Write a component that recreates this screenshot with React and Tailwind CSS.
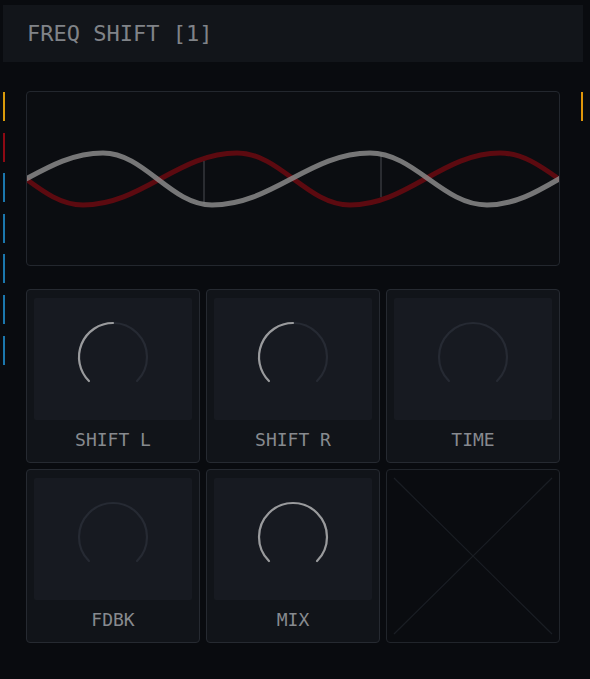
import React from "react";

const FONT = { fontFamily: '"DejaVu Sans Mono", "Liberation Mono", monospace' };

function wavePath(pts, k = 0.38) {
  let d = `M ${pts[0][0]} ${pts[0][1]}`;
  for (let i = 1; i < pts.length; i++) {
    const [ax, ay] = pts[i - 1];
    const [bx, by] = pts[i];
    const dx = bx - ax;
    d += ` C ${ax + k * dx} ${ay} ${bx - k * dx} ${by} ${bx} ${by}`;
  }
  return d;
}

const grayPts = [[-51, 205], [103, 153], [212, 205], [370, 153], [487, 205], [631, 153]];
const redPts = [[-31, 153], [83, 205], [237, 153], [350, 205], [500, 153], [618, 205]];

function arcPoint(cx, cy, r, deg) {
  const a = (deg * Math.PI) / 180;
  return [cx + r * Math.sin(a), cy - r * Math.cos(a)];
}

function arc(cx, cy, r, a0, a1) {
  const [x0, y0] = arcPoint(cx, cy, r, a0);
  const [x1, y1] = arcPoint(cx, cy, r, a1);
  const large = a1 - a0 > 180 ? 1 : 0;
  return `M ${x0} ${y0} A ${r} ${r} 0 ${large} 1 ${x1} ${y1}`;
}

function Knob({ value }) {
  const cx = 40, cy = 40, r = 34;
  const end = -135 + 270 * value;
  return (
    <svg width="80" height="80" viewBox="0 0 80 80">
      <path d={arc(cx, cy, r, -135, 135)} fill="none" stroke="#262a33" strokeWidth="2.2" strokeLinecap="round" />
      {value > 0 && (
        <path d={arc(cx, cy, r, -135, end)} fill="none" stroke="#9a9b9d" strokeWidth="2.2" strokeLinecap="round" />
      )}
    </svg>
  );
}

function KnobCell({ label, value }) {
  return (
    <div className="h-[174px] flex flex-col rounded-[4px] border border-[#262a31] bg-[#111419] px-[7px] pt-[8px]">
      <div className="h-[122px] flex items-center justify-center bg-[#171a21] rounded-[2px] pb-[4px]">
        <Knob value={value} />
      </div>
      <div className="flex-1 flex items-center justify-center pb-[3px] text-[18px] leading-none text-[#878a8f]" style={FONT}>
        {label}
      </div>
    </div>
  );
}

function EmptyCell() {
  return (
    <div className="h-[174px] rounded-[4px] border border-[#21252b] bg-[#0a0c10] overflow-hidden">
      <svg className="block w-full h-full" viewBox="0 0 172 172" preserveAspectRatio="none">
        <line x1="7" y1="8" x2="165" y2="164" stroke="#1a1e24" strokeWidth="1.2" />
        <line x1="165" y1="8" x2="7" y2="164" stroke="#1a1e24" strokeWidth="1.2" />
      </svg>
    </div>
  );
}

const leftColors = ["#d99a0a", "#8e0a14", "#1b77ad", "#1b77ad", "#1b77ad", "#1b77ad", "#1b77ad"];

export default function App() {
  return (
    <div className="w-[590px] h-[679px] bg-[#090b0f] overflow-hidden pt-[5px]">
      <div className="ml-[3px] w-[580px] h-[57px] bg-[#12151a] flex items-center pl-[24px] pt-[1px]">
        <span className="text-[22px] leading-none text-[#808388]" style={FONT}>
          FREQ SHIFT [1]
        </span>
      </div>

      <div className="flex mt-[29px]">
        <div className="ml-[3px] w-[2px] pt-[1px] flex flex-col gap-[11.6px]">
          {leftColors.map((c, i) => (
            <div key={i} className="h-[29px] w-[2px]" style={{ backgroundColor: c }} />
          ))}
        </div>

        <div className="ml-[21px] w-[534px] flex flex-col">
          <div className="h-[175px] rounded-[4px] border border-[#23272e] bg-[#0b0d11] overflow-hidden">
            <svg className="block w-full h-full" viewBox="27 92 532 173" preserveAspectRatio="none">
              <path d={wavePath(redPts)} fill="none" stroke="#5c0a10" strokeWidth="5" />
              <line x1="204" y1="161" x2="204" y2="204" stroke="#4a4d52" strokeWidth="1" />
              <line x1="381" y1="153" x2="381" y2="197" stroke="#4a4d52" strokeWidth="1" />
              <path d={wavePath(grayPts)} fill="none" stroke="#8e8e8e" strokeOpacity="0.82" strokeWidth="5" />
            </svg>
          </div>

          <div className="mt-[23px] grid grid-cols-3 gap-[6px]">
            <KnobCell label="SHIFT L" value={0.5} />
            <KnobCell label="SHIFT R" value={0.5} />
            <KnobCell label="TIME" value={0} />
            <KnobCell label="FDBK" value={0} />
            <KnobCell label="MIX" value={1} />
            <EmptyCell />
          </div>
        </div>

        <div className="ml-[21px] w-[2px] pt-[1px]">
          <div className="h-[29px] w-[2px] bg-[#e0960a]" />
        </div>
      </div>
    </div>
  );
}
